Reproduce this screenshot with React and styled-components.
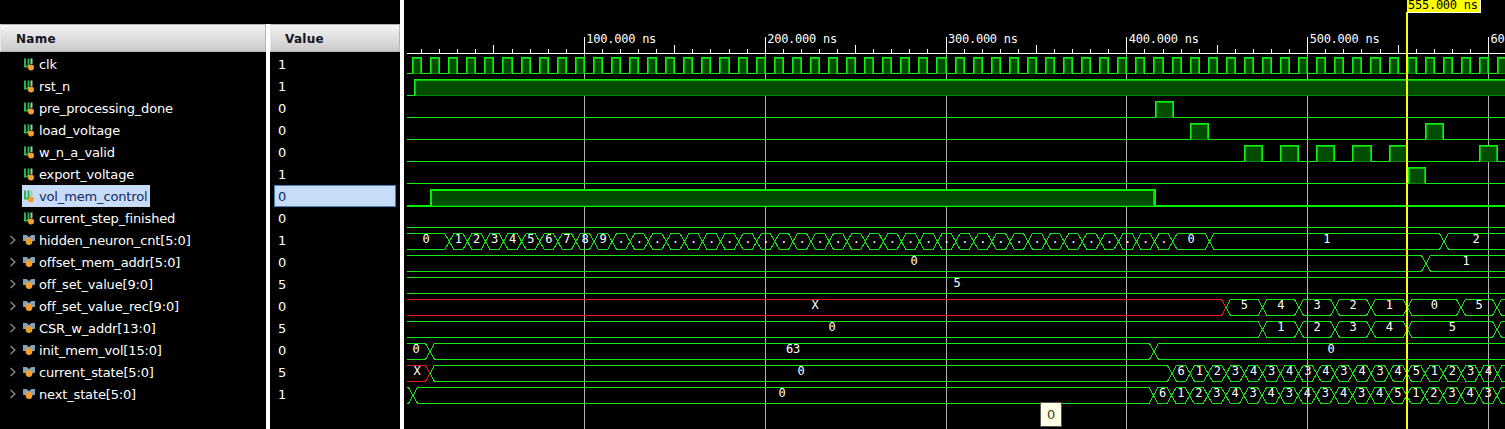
import React from 'react'
import styled, { createGlobalStyle } from 'styled-components'

const GlobalStyle = createGlobalStyle`
  html, body { margin: 0; padding: 0; background: #000; }
  body { overflow: hidden; }
`

const Page = styled.div`
  display: flex;
  width: 1505px;
  height: 429px;
  background: #000;
  overflow: hidden;
  font-family: "DejaVu Sans", sans-serif;
  font-size: 13px;
  letter-spacing: -0.15px;
`
const Column = styled.div`
  display: flex;
  flex-direction: column;
  flex: none;
  width: ${p => p.width}px;
  padding-top: 24px;
`
const Divider = styled.div`
  flex: none;
  width: ${p => p.width}px;
  margin-top: ${p => p.top || 0}px;
  background: #fff;
`
const Header = styled.div`
  height: 28px;
  margin-bottom: 1px;
  box-sizing: border-box;
  display: flex;
  align-items: center;
  padding-left: ${p => p.indent}px;
  padding-top: 2px;
  background: linear-gradient(#f4f4f4, #c9c9c9);
  border: 1px solid #b4b4b4;
  border-left-color: #e8e8e8;
  color: #14141e;
  font-weight: bold;
  font-size: 12px;
  letter-spacing: 0.3px;
`
const Row = styled.div`
  height: 22px;
  display: flex;
  align-items: center;
  color: #fff;
  white-space: nowrap;
`
const Chevron = styled.svg`
  flex: none;
  width: 8px;
  height: 10px;
  margin-left: 9px;
  margin-right: 5px;
`
const Spacer = styled.div`
  flex: none;
  width: 22px;
`
const NameLabel = styled.div`
  display: flex;
  align-items: center;
  gap: 4px;
  height: 22px;
  padding: 0 3px 0 1px;
  background: ${p => (p.selected ? '#c8dcfa' : 'transparent')};
  color: ${p => (p.selected ? '#14285a' : '#fff')};
`
const ValueCell = styled.div`
  height: 22px;
  box-sizing: border-box;
  width: 122px;
  margin-left: 4px;
  display: flex;
  align-items: center;
  padding-left: 3px;
  background: ${p => (p.selected ? '#c8dcfa' : 'transparent')};
  border: 1px solid ${p => (p.selected ? '#3f83b8' : 'transparent')};
  color: ${p => (p.selected ? '#14285a' : '#fff')};
`
const WavePanel = styled.div`
  flex: 1;
  position: relative;
  height: 429px;
`
const WaveSvg = styled.svg`
  display: block;
  width: 1101px;
  height: 429px;
  font-family: "DejaVu Sans Mono", monospace;
  font-size: 12px;
  letter-spacing: -0.25px;
`
const CursorFlag = styled.div`
  position: absolute;
  left: 1003px;
  top: 0;
  width: 74px;
  height: 13px;
  box-sizing: border-box;
  overflow: hidden;
  background: #ffff00;
  border-right: 1px solid #fff;
  border-bottom: 1px solid #fff;
  color: #000;
  font-family: "DejaVu Sans Mono", monospace;
  font-size: 12px;
  letter-spacing: -0.25px;
  line-height: 10px;
  white-space: nowrap;
  padding-left: 1px;
`
const Tooltip = styled.div`
  position: absolute;
  left: 636px;
  top: 402px;
  width: 22px;
  height: 25px;
  box-sizing: border-box;
  display: flex;
  align-items: center;
  justify-content: center;
  background: #ffffe6;
  border: 1px solid #555;
  color: #4a3a20;
  font-size: 13px;
`

const signals = [
  { name: 'clk', value: '1' },
  { name: 'rst_n', value: '1' },
  { name: 'pre_processing_done', value: '0' },
  { name: 'load_voltage', value: '0' },
  { name: 'w_n_a_valid', value: '0' },
  { name: 'export_voltage', value: '1' },
  { name: 'vol_mem_control', value: '0', selected: true },
  { name: 'current_step_finished', value: '0' },
  { name: 'hidden_neuron_cnt[5:0]', value: '1', bus: true },
  { name: 'offset_mem_addr[5:0]', value: '0', bus: true },
  { name: 'off_set_value[9:0]', value: '5', bus: true },
  { name: 'off_set_value_rec[9:0]', value: '0', bus: true },
  { name: 'CSR_w_addr[13:0]', value: '5', bus: true },
  { name: 'init_mem_vol[15:0]', value: '0', bus: true },
  { name: 'current_state[5:0]', value: '5', bus: true },
  { name: 'next_state[5:0]', value: '1', bus: true }
]

const OX = 404 // wave panel starts here, all x below are page coords
const LEFT = 407
const RIGHT = 1505
const NS = 1.8084
const T0 = 403.5
const CLK = 18.084
const HALF = 4.5

const low = r => 73.5 + 22 * r
const high = r => 57.5 + 22 * r
const sx = x => x - OX
const px = x => Math.floor(x) - OX + 0.5

const GREEN = '#14e614'
const BRIGHT = '#10f010'
const EDGE = '#00c000'
const MID = '#008800'
const FILL = '#004c00'

const ScalarIcon = () => (
  <svg width="12" height="13" viewBox="0 0 12 13" style={{ flex: 'none' }}>
    <path d="M2 0.5V8.5H5.5V0.5" fill="none" stroke="#2fb04e" strokeWidth="2" />
    <path d="M8.5 0.5V6" fill="none" stroke="#8fd89f" strokeWidth="2" />
    <circle cx="8" cy="9.5" r="3" fill="#f0a030" />
  </svg>
)

const BusIcon = () => (
  <svg width="12" height="12" viewBox="0 0 12 12" style={{ flex: 'none' }}>
    <path d="M0 1H3.5L6 3L8.5 1H12V7H0Z" fill="#86a2b8" />
    <circle cx="6" cy="7.5" r="3.4" fill="#f0a030" />
  </svg>
)

function pulses(r, edges, thick) {
  // edges: list of [rise, fall], drawn over a flat low line
  const l = low(r)
  const h = high(r)
  const colour = thick ? '#00f000' : BRIGHT
  const out = [
    <line key="low" x1={sx(LEFT)} x2={sx(RIGHT)} y1={l} y2={l} stroke={colour} strokeWidth={thick ? 2 : 1} />
  ]
  edges.forEach(([a, b], i) => {
    const x1 = px(a)
    const x2 = px(b)
    out.push(
      <g key={i}>
        <rect x={x1} y={h} width={x2 - x1} height={l - h} fill={FILL} stroke="none" />
        <line x1={x1} x2={x2} y1={l} y2={l} stroke={MID} />
        <path d={`M${x1 + 1} ${l - 1}V${h + 1}H${x2 - 1}V${l - 1}`} fill="none" stroke={EDGE} />
        <path d={`M${x1} ${l}V${h}H${x2}V${l}`} fill="none" stroke={colour} strokeWidth={thick ? 2 : 1} />
      </g>
    )
  })
  return out
}

function busRow(r, segs) {
  // segs: [{ to, label, x?, red? }] a segment ends where the next one crosses it
  const t = high(r)
  const b = low(r)
  const m = (t + b) / 2
  const out = []
  let from = null
  segs.forEach((s, i) => {
    const a = from === null ? LEFT : from + HALF
    const z = s.to - HALF
    const c = s.red ? '#f01414' : GREEN
    const head = from === null ? `M${sx(a)} ${t}` : `M${sx(from)} ${m}L${sx(a)} ${t}`
    const tail = from === null ? `H${sx(a)}` : `H${sx(a)}L${sx(from)} ${m}`
    const d = `${head}H${sx(z)}L${sx(s.to)} ${m}L${sx(z)} ${b}${tail}`
    out.push(<path key={i} d={d} fill="none" stroke={c} strokeWidth="1" />)
    if (s.label) {
      const lx = s.x || (a + Math.min(z, RIGHT)) / 2
      out.push(
        <text key={'t' + i} x={sx(lx)} y={(r - 8) * 22 + 243} fill="#fff" textAnchor="middle">{s.label}</text>
      )
    }
    from = s.to
  })
  return out
}

const train = (start, labels) => labels.map((label, i) => ({ to: start + CLK * (i + 1), label }))

const hiddenLabels = ['1', '2', '3', '4', '5', '6', '7', '8', '9', ...Array(31).fill('.')]
const seq = ['6', '1', '2', '3', '4', '3', '4', '3', '4', '3', '4', '3', '4', '5', '1', '2', '3', '4']

const buses = [
  [{ to: 449.3, label: '0' }, ...train(449.3, hiddenLabels), { to: 1209.5, label: '0' }, { to: 1444, label: '1' }, { to: 1510, label: '2', x: 1476 }],
  [{ to: 1426, label: '0', x: 914 }, { to: 1530, label: '1', x: 1466 }],
  [{ to: 1530, label: '5', x: 957 }],
  [{ to: 1226, label: 'X', x: 815, red: true }, { to: 1262.5, label: '5' }, { to: 1299, label: '4' }, { to: 1335, label: '3' }, { to: 1371, label: '2' }, { to: 1407.5, label: '1' }, { to: 1461, label: '0' }, { to: 1497, label: '5' }, { to: 1530 }],
  [{ to: 1262.5, label: '0', x: 832 }, { to: 1299, label: '1' }, { to: 1335, label: '2' }, { to: 1371, label: '3' }, { to: 1407.5, label: '4' }, { to: 1497, label: '5' }, { to: 1530 }],
  [{ to: 430, label: '0', x: 416 }, { to: 1154, label: '63', x: 793 }, { to: 1530, label: '0', x: 1331 }],
  [{ to: 430, label: 'X', x: 417, red: true }, { to: 1172, label: '0', x: 801 }, ...train(1172, seq), { to: 1172 + CLK * 19 }, { to: 1530 }],
  [{ to: 413 }, { to: 1153.5, label: '0', x: 782 }, ...train(1153.5, [...seq, '3']), { to: 1153.5 + CLK * 20 }]
]

const axisTicks = []
for (let k = 1; T0 + k * CLK < RIGHT; k++) axisTicks.push(k)

const Waves = () => {
  const clk = []
  for (let k = 0; T0 + CLK * (k + 0.5) < RIGHT; k++) {
    clk.push([T0 + CLK * (k + 0.5), T0 + CLK * (k + 1)])
  }
  return (
    <WaveSvg viewBox="0 0 1101 429" shapeRendering="crispEdges">
      {[1, 2, 3, 4, 5, 6].map(n => {
        const x = px(T0 + n * 100 * NS)
        return <line key={n} x1={x} x2={x} y1="37" y2="429" stroke="#b4b4b4" strokeWidth="1" />
      })}
      <line x1={sx(LEFT)} x2={sx(RIGHT)} y1="53.5" y2="53.5" stroke="#fff" strokeWidth="1" />
      {axisTicks.map(k => {
        const x = px(T0 + k * CLK)
        if (k % 10 === 0) return <line key={k} x1={x} x2={x} y1="37" y2="53" stroke="#fff" />
        const big = k % 5 === 0
        return <line key={k} x1={x} x2={x} y1={big ? 45 : 49} y2="53" stroke="#fff" />
      })}
      {[1, 2, 3, 4, 5, 6].map(n => (
        <text key={n} x={sx(T0 + n * 100 * NS) + 2} y="43" fill="#fff">{n}00.000 ns</text>
      ))}

      {pulses(0, clk)}
      {pulses(1, [[414.5, RIGHT + 5]])}
      {pulses(2, [[1155.7, 1173.3]])}
      {pulses(3, [[1190.7, 1208.5], [1425.7, 1443.5]])}
      {pulses(4, [[1244.3, 1262.3], [1280.3, 1298.3], [1316.3, 1334.3], [1352.3, 1371], [1389.3, 1407], [1479.7, 1497.5]])}
      {pulses(5, [[1408, 1425.5]])}
      {pulses(6, [[430, 1154]], true)}
      {pulses(7, [])}
      {buses.map((segs, i) => busRow(8 + i, segs))}

      <line x1={sx(1407)} x2={sx(1407)} y1="12" y2="429" stroke="#ffff00" strokeWidth="2" />
    </WaveSvg>
  )
}

export default function App() {
  return (
    <>
      <GlobalStyle />
      <Page>
        <Column width={266}>
          <Header indent={15}>Name</Header>
          {signals.map(s => (
            <Row key={s.name}>
              {s.bus ? (
                <Chevron viewBox="0 0 8 10">
                  <path d="M1.5 1L6 5L1.5 9" fill="none" stroke="#9a9a9a" strokeWidth="1.1" />
                </Chevron>
              ) : (
                <Spacer />
              )}
              <NameLabel selected={s.selected}>
                {s.bus ? <BusIcon /> : <ScalarIcon />}
                {s.name}
              </NameLabel>
            </Row>
          ))}
        </Column>
        <Divider width={4} top={24} />
        <Column width={130}>
          <Header indent={14}>Value</Header>
          {signals.map(s => (
            <ValueCell key={s.name} selected={s.selected}>{s.value}</ValueCell>
          ))}
        </Column>
        <Divider width={4} />
        <WavePanel>
          <Waves />
          <CursorFlag>555.000 ns</CursorFlag>
          <Tooltip>0</Tooltip>
        </WavePanel>
      </Page>
    </>
  )
}
